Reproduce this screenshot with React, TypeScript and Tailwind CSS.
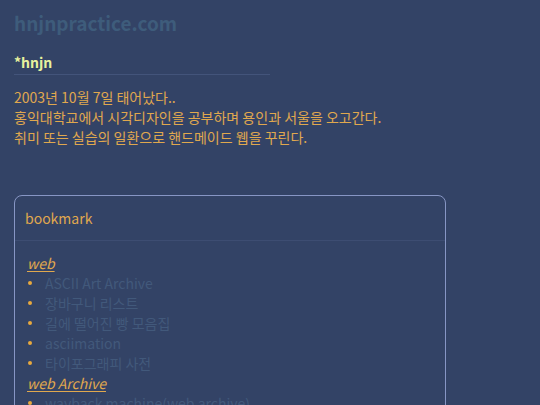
import React from "react";

const GROUPS = [
  {
    name: "web",
    links: [
      "ASCII Art Archive",
      "장바구니 리스트",
      "길에 떨어진 빵 모음집",
      "asciimation",
      "타이포그래피 사전",
    ],
  },
  {
    name: "web Archive",
    links: ["wayback machine(web archive)"],
  },
];

export default function App() {
  return (
    <div
      className="min-h-screen bg-[#334366] px-[14px] pt-[10px]"
      style={{ fontFamily: '"Noto Sans CJK KR", "Noto Sans", sans-serif' }}
    >
      <h1 className="text-[19px] font-bold leading-[26px] text-[#3e5c7b]">
        hnjnpractice.com
      </h1>

      <div className="mt-[16px] w-[256px] border-b border-[#43547a] pb-[2px] text-[14px] font-bold leading-[20px] text-[#e8f29e]">
        *hnjn
      </div>

      <div className="mt-[12px] text-[14px] leading-[20px] text-[#e0a84e]">
        <p>2003년 10월 7일 태어났다..</p>
        <p>홍익대학교에서 시각디자인을 공부하며 용인과 서울을 오고간다.</p>
        <p>취미 또는 실습의 일환으로 핸드메이드 웹을 꾸린다.</p>
      </div>

      <div className="mt-[48px] w-[432px] rounded-lg border border-[#8796c4]">
        <div className="flex h-[45px] items-center border-b border-[#3d4d72] px-[10px] text-[14px] text-[#e0a84e]">
          bookmark
        </div>
        <div className="px-[12px] pt-[12px] pb-4 text-[14px] leading-[20px]">
          {GROUPS.map((g) => (
            <div key={g.name}>
              <div className="italic text-[#e0a84e] underline underline-offset-2">
                {g.name}
              </div>
              <ul>
                {g.links.map((l) => (
                  <li key={l} className="flex items-center">
                    <span className="ml-[1px] mr-[13px] h-[4px] w-[4px] rounded-full bg-[#e8a83e]" />
                    <span className="text-[#42597b]">{l}</span>
                  </li>
                ))}
              </ul>
            </div>
          ))}
        </div>
      </div>
    </div>
  );
}
